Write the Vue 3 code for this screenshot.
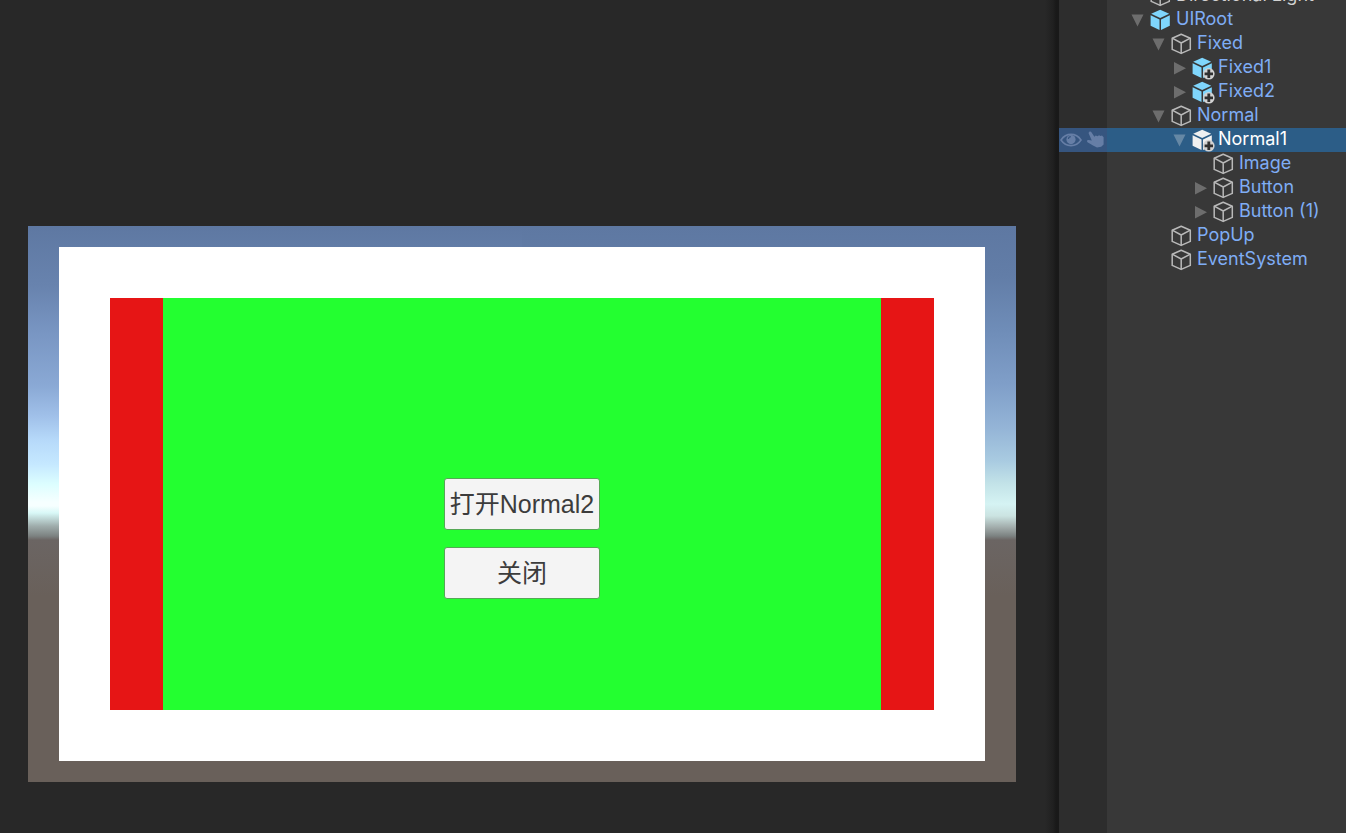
<script setup>
const rows = [
  { name: 'Directional Light', level: 1, icon: 'outline', plain: true },
  { name: 'UIRoot', level: 1, icon: 'prefab', arrow: 'down' },
  { name: 'Fixed', level: 2, icon: 'outline', arrow: 'down' },
  { name: 'Fixed1', level: 3, icon: 'prefab', arrow: 'right', added: true },
  { name: 'Fixed2', level: 3, icon: 'prefab', arrow: 'right', added: true },
  { name: 'Normal', level: 2, icon: 'outline', arrow: 'down' },
  { name: 'Normal1', level: 3, icon: 'prefab', arrow: 'down', added: true, selected: true },
  { name: 'Image', level: 4, icon: 'outline' },
  { name: 'Button', level: 4, icon: 'outline', arrow: 'right' },
  { name: 'Button (1)', level: 4, icon: 'outline', arrow: 'right' },
  { name: 'PopUp', level: 2, icon: 'outline' },
  { name: 'EventSystem', level: 2, icon: 'outline' },
]
</script>

<template>
  <div class="editor">
    <main class="game">
      <div class="sky">
        <div class="fixed-panel">
          <div class="red-panel">
            <div class="normal-panel">
              <button type="button" class="ui-button">打开Normal2</button>
              <button type="button" class="ui-button">关闭</button>
            </div>
          </div>
        </div>
      </div>
    </main>

    <aside class="hierarchy">
      <ul class="tree">
        <li v-for="row in rows" :key="row.name" class="row" :class="{ selected: row.selected, plain: row.plain }">
          <div class="tools">
            <template v-if="row.selected">
              <svg width="22" height="16" viewBox="0 0 22 16" aria-hidden="true">
                <path d="M1 8C6 0.5 16 0.5 21 8C16 15.5 6 15.5 1 8Z" fill="none" stroke="#667ea6" stroke-width="1.6" />
                <circle cx="11" cy="7.6" r="4.6" fill="#667ea6" />
                <path d="M8.4 7a2.6 2.6 0 0 1 2.4-2.4" fill="none" stroke="#36557f" stroke-width="1.2" />
              </svg>
              <svg width="20" height="18" viewBox="0 0 20 18" aria-hidden="true">
                <path d="M3.2 0.9C4 0.2 5.1 0.5 5.6 1.5L8.4 5.8L9.7 4.6L11.6 5.3L13 4.2L14.6 5L16 4.6L17.6 6.2V13.6L15.2 15.8L11 16.6L7 14.4L1.5 11.2C0.5 10.1 1 9 2.4 9.1L5.8 9.6L2.8 2.8C2.5 2 2.6 1.4 3.2 0.9Z" fill="#667ea6" />
              </svg>
            </template>
          </div>
          <div class="item" :style="{ paddingLeft: row.level * 21 + 'px' }">
            <span class="arrow">
              <svg v-if="row.arrow" width="14" height="14" viewBox="0 0 14 14" aria-hidden="true">
                <path :d="row.arrow === 'down' ? 'M1.5 1.5H13.5L7.5 13.5Z' : 'M2 1V13.5L14 7.2Z'" />
              </svg>
            </span>
            <svg class="cube" width="24" height="24" viewBox="0 0 24 24" aria-hidden="true">
              <g v-if="row.icon === 'outline'" fill="none" stroke="#b9b9b9" stroke-width="1.5" stroke-linejoin="round">
                <path d="M10.2 2.2L19.3 6.2V17.4L10.2 21.4L1.2 17.4V6.2Z" />
                <path d="M1.2 6.2L10.2 11L19.3 6.2M10.2 11V21.4" />
              </g>
              <g v-else class="solid">
                <path d="M10.2 1.8L19.2 5.8L10.2 10L1.2 5.8Z" />
                <path d="M0.6 7.2L9.5 11.4V22L0.6 17.8Z" />
                <path d="M11 11.4L19.8 7.2V17.8L11 22Z" />
              </g>
              <g v-if="row.added">
                <circle cx="16.8" cy="17.8" r="5.8" fill="#d2d2d2" />
                <path d="M16.8 13.6V22M12.6 17.8H21" fill="none" stroke="#303030" stroke-width="2.8" />
              </g>
            </svg>
            <span class="label">{{ row.name }}</span>
          </div>
        </li>
      </ul>
    </aside>
  </div>
</template>

<style>
body {
  background: #282828;
}
</style>

<style scoped>
.editor {
  display: grid;
  grid-template-columns: minmax(0, 1fr) 287px;
  height: 100vh;
  overflow: hidden;
  background: #282828;
}

.game {
  display: flex;
  padding: 226px 43px 51px 28px;
  background: linear-gradient(to left, #191919 0, #191919 3px, #202020 6px, #282828 14px);
}

.sky {
  display: flex;
  flex: 1;
  padding: 21px 31px;
  background:
    linear-gradient(to bottom,
      #5e78a2 0, #627da7 50px, #6f8db8 105px, #809fc9 160px, #93b3d6 200px,
      #a9cbe1 235px, #c3e3e8 258px, #d5f3f3 278px, #cbe3e1 290px,
      #9fa9a8 302px, #7c8281 310px, #6b6563 314px, #69605a 370px, #69605a 100%) 100% 0 / 50% 100% no-repeat,
    linear-gradient(to bottom,
      #5e78a2 0, #6883ae 60px, #7895c2 105px, #8aa9d5 160px, #a0c0e9 190px,
      #b7dafa 215px, #c5e8ff 238px, #dcfeff 258px, #f6ffff 276px, #f6ffff 280px, #d8f8f7 287px,
      #9fadac 300px, #7c8281 310px, #6b6563 314px, #69605a 370px, #69605a 100%);
}

.fixed-panel {
  display: flex;
  flex: 1;
  padding: 51px;
  background: #fff;
}

.red-panel {
  display: flex;
  flex: 1;
  padding: 0 53px;
  background: #e61515;
}

.normal-panel {
  display: flex;
  flex: 1;
  flex-direction: column;
  align-items: center;
  justify-content: center;
  gap: 17px;
  padding-top: 69px;
  background: #23ff30;
}

.ui-button {
  box-sizing: border-box;
  width: 156px;
  height: 52px;
  padding: 0;
  border: 1px solid #55a855;
  border-radius: 3px;
  background: #f4f4f4;
  color: #3c3c3c;
  font: 25px/32px "Liberation Sans", "Noto Sans CJK SC", sans-serif;
  white-space: nowrap;
}

.hierarchy {
  overflow: hidden;
  background: linear-gradient(to right, #2d2d2d 48px, #383838 48px);
}

.tree {
  margin: -16px 0 0;
  padding: 0;
  list-style: none;
}

.row {
  display: flex;
  height: 24px;
  color: #7fadf5;
  font: 18px/22px Inter, sans-serif;
}

.row.plain {
  color: #d2d2d2;
}

.row.selected {
  background: #2c5d87;
  color: #fff;
}

.tools {
  display: flex;
  flex: none;
  align-items: center;
  gap: 4px;
  width: 47px;
  padding-left: 1px;
}

.selected .tools {
  background: #36557f;
}

.item {
  display: flex;
  align-items: flex-start;
  white-space: nowrap;
}

.arrow {
  width: 22px;
  height: 24px;
}

.arrow svg {
  display: block;
  margin: 5px 0 0 2px;
  fill: #6d6d6d;
}

.selected .arrow svg {
  fill: #6688a5;
}

.cube {
  flex: none;
  margin-right: 2px;
}

.solid {
  fill: #7fd6fd;
}

.selected .solid {
  fill: #f0f0f0;
}
</style>
